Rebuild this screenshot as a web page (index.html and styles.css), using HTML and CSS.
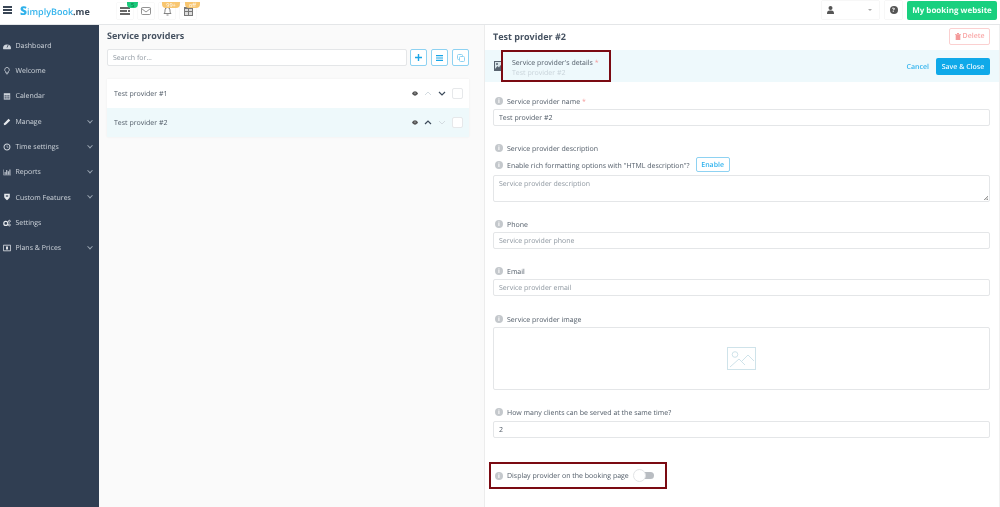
FILE: index.html
```html
<!DOCTYPE html>
<html lang="en">
<head>
<meta charset="utf-8">
<title>Service providers</title>
<link rel="stylesheet" href="styles.css">
</head>
<body>
<header class="topbar">
  <div class="burger"><i></i><i></i><i></i></div>
  <div class="logo"><span class="logo-s">S</span><span class="logo-blue">implyBook</span><span class="logo-dark">.me</span></div>
  <div class="top-icons">
    <div class="top-icon"><svg width="10" height="8" viewBox="0 0 10 8"><path d="M0 0h10v2H0zM0 3h7v2H0zM8 3h2v2H8zM0 6h10v2H0z" fill="#666"/></svg><span class="badge badge-green">5</span></div>
    <div class="top-icon"><svg width="10" height="8" viewBox="0 0 10 8" fill="none" stroke="#777" stroke-width=".8"><rect x=".5" y=".5" width="9" height="7" rx="1"/><path d="M.5 1.5 5 5l4.500-3.500"/></svg></div>
    <div class="top-icon"><svg width="9" height="10" viewBox="0 0 9 10" fill="none" stroke="#666" stroke-width=".8"><path d="M1 7.500c1-1 1-2 1-3.500a2.500 2.500 0 0 1 5 0c0 1.500 0 2.500 1 3.500zM3.500 9h2"/></svg><span class="badge badge-orange">99+</span></div>
    <div class="top-icon"><svg width="9" height="10" viewBox="0 0 9 10"><path d="M0 1h9v9H0z" fill="#777"/><path d="M1 3h3v2H1zM5 3h3v2H5zM1 6h3v3H1zM5 6h3v3H5z" fill="#ddd"/></svg><span class="badge badge-orange badge-off">off</span></div>
  </div>
  <div class="top-right">
    <div class="user-box"><svg width="7" height="8" viewBox="0 0 7 8"><circle cx="3.500" cy="2" r="2" fill="#555"/><path d="M0 8c0-3 1-3.500 3.500-3.500S7 5 7 8z" fill="#555"/></svg><span class="caret"></span></div>
    <div class="help-box"><span class="help">?</span></div>
    <a class="btn-site">My booking website</a>
  </div>
</header>
<div class="shell">
  <nav class="sidebar">
    <div class="nav-item"><svg class="nav-ico" viewBox="0 0 10 8"><path d="M0 7a5 5 0 1 1 10 0l-.5 1H.5z" fill="#ccd2da"/><path d="M5 6l1.500-3.500" stroke="#303e52"/></svg><span>Dashboard</span></div>
    <div class="nav-item"><svg class="nav-ico" viewBox="0 0 10 10"><path d="M5 .500a3 3 0 0 0-1.500 5.500V7.500h3V6A3 3 0 0 0 5 .500zM4 8.500h2" fill="none" stroke="#ccd2da" stroke-width="1"/></svg><span>Welcome</span></div>
    <div class="nav-item"><svg class="nav-ico" viewBox="0 0 10 10"><path d="M1 1.500h8v8H1z" fill="#ccd2da"/><path d="M2 4h1.500v1.500H2zM4.300 4h1.500v1.500H4.300zM6.500 4H8v1.500H6.500zM2 6.500h1.500V8H2zM4.300 6.500h1.500V8H4.300zM6.500 6.500H8V8H6.500z" fill="#303e52"/></svg><span>Calendar</span></div>
    <div class="nav-item"><svg class="nav-ico" viewBox="0 0 10 10"><path d="M1 9l.5-2.500L7 1l2 2-5.500 5.500z" fill="#e6e9ed"/></svg><span>Manage</span><i class="chev"></i></div>
    <div class="nav-item"><svg class="nav-ico" viewBox="0 0 10 10"><circle cx="5" cy="5" r="3.700" fill="none" stroke="#ccd2da" stroke-width="1.300"/><path d="M5 3v2.300h1.800" fill="none" stroke="#ccd2da" stroke-width=".8"/></svg><span>Time settings</span><i class="chev"></i></div>
    <div class="nav-item"><svg class="nav-ico" viewBox="0 0 10 10"><path d="M.5 9V2h.6v6.400H10V9zM2 8V5h1.300v3zM4 8V2.500h1.300V8zM6 8V4h1.300v4zM8 8V2h1.300v6z" fill="#ccd2da"/></svg><span>Reports</span><i class="chev"></i></div>
    <div class="nav-item"><svg class="nav-ico" viewBox="0 0 10 10"><path d="M1.500 1h7v3.500c0 2-2 3.500-3.500 4.500C3.500 8 1.500 6.500 1.500 4.500z" fill="#e6e9ed"/><path d="M3.500 3h3v1.500h-3z" fill="#303e52"/></svg><span>Custom Features</span><i class="chev"></i></div>
    <div class="nav-item"><svg class="nav-ico" viewBox="0 0 10 10"><circle cx="3.500" cy="5.500" r="2.500" fill="none" stroke="#e6e9ed" stroke-width="1.500"/><circle cx="8" cy="2.800" r="1.200" fill="none" stroke="#e6e9ed" stroke-width="1"/><circle cx="8" cy="7.500" r="1.200" fill="none" stroke="#e6e9ed" stroke-width="1"/></svg><span>Settings</span></div>
    <div class="nav-item"><svg class="nav-ico" viewBox="0 0 10 8"><path d="M.5.500h9v7h-9z" fill="none" stroke="#e6e9ed"/><path d="M3.800 2h2.400v4H3.800z" fill="#e6e9ed"/></svg><span>Plans &amp; Prices</span><i class="chev"></i></div>
  </nav>
  <main class="list-pane">
    <h1 class="pane-title">Service providers</h1>
    <div class="search-row">
      <div class="input search">Search for...</div>
      <span class="tool-btn"><svg width="7" height="7" viewBox="0 0 7 7"><path d="M2.800 0h1.400v2.800H7v1.400H4.200V7H2.800V4.200H0V2.800h2.800z" fill="#1aa5e6"/></svg></span>
      <span class="tool-btn"><svg width="7" height="6" viewBox="0 0 7 6"><path d="M0 0h7v1.200H0zM0 2.400h7v1.200H0zM0 4.800h7V6H0z" fill="#1aa5e6"/></svg></span>
      <span class="tool-btn"><svg width="8" height="8" viewBox="0 0 8 8" fill="none" stroke="#8ed2f2"><rect x=".5" y=".5" width="5" height="5" rx="1"/><rect x="2.500" y="2.500" width="5" height="5" rx="1" fill="#fff"/></svg></span>
    </div>
    <div class="provider-list">
      <div class="provider">
        <span class="provider-name">Test provider #1</span>
        <svg class="eye" width="6" height="5" viewBox="0 0 7 5"><path d="M0 2.500C1 1 2.200 0 3.500 0S6 1 7 2.500C6 4 4.800 5 3.500 5S1 4 0 2.500z" fill="#555"/><circle cx="3.500" cy="2" r=".7" fill="#ddd"/></svg>
        <svg class="arrow" width="8" height="5" viewBox="0 0 8 5" fill="none" stroke="#d3dbe0"><path d="M1 4l3-3 3 3"/></svg>
        <svg class="arrow" width="8" height="5" viewBox="0 0 8 5" fill="none" stroke="#3c4a5a" stroke-width="1.200"><path d="M1 1l3 3 3-3"/></svg>
        <span class="check"></span>
      </div>
      <div class="provider active">
        <span class="provider-name">Test provider #2</span>
        <svg class="eye" width="6" height="5" viewBox="0 0 7 5"><path d="M0 2.500C1 1 2.200 0 3.500 0S6 1 7 2.500C6 4 4.800 5 3.500 5S1 4 0 2.500z" fill="#555"/><circle cx="3.500" cy="2" r=".7" fill="#ddd"/></svg>
        <svg class="arrow" width="8" height="5" viewBox="0 0 8 5" fill="none" stroke="#3c4a5a" stroke-width="1.200"><path d="M1 4l3-3 3 3"/></svg>
        <svg class="arrow" width="8" height="5" viewBox="0 0 8 5" fill="none" stroke="#d3dbe0"><path d="M1 1l3 3 3-3"/></svg>
        <span class="check"></span>
      </div>
    </div>
  </main>
  <section class="detail-pane">
    <div class="detail-head">
      <h2 class="detail-title">Test provider #2</h2>
      <span class="btn-delete"><svg width="6" height="7" viewBox="0 0 6 7"><path d="M0 1h6v.8H0zM2 0h2v1H2zM.7 2h4.600v5H.7z" fill="#f49a9a"/></svg>Delete</span>
    </div>
    <div class="strip">
      <svg class="strip-ico" width="9" height="10" viewBox="0 0 9 10"><path d="M0 0h9v10H0z" fill="#58636f"/><path d="M1 1h7v8H1z" fill="#d9e6ea"/><circle cx="3" cy="3" r="1" fill="#58636f"/><path d="M1 8l2.500-3 1.500 1.500L6.500 4 8 6v3H1z" fill="#58636f"/></svg>
      <div class="mark strip-mark">
        <div class="strip-label">Service provider's details <b class="req">*</b></div>
        <div class="strip-sub">Test provider #2</div>
      </div>
      <a class="link-cancel">Cancel</a>
      <span class="btn-save">Save &amp; Close</span>
    </div>
    <div class="form">
      <div class="label f-name"><i class="info">i</i>Service provider name <b class="req">*</b></div>
      <div class="input value">Test provider #2</div>
      <div class="label f-desc"><i class="info">i</i>Service provider description</div>
      <div class="label f-rich"><i class="info">i</i>Enable rich formatting options with "HTML description"?<span class="btn-enable">Enable</span></div>
      <div class="input textarea">Service provider description<span class="grip"></span></div>
      <div class="label f-gap"><i class="info">i</i>Phone</div>
      <div class="input">Service provider phone</div>
      <div class="label f-gap"><i class="info">i</i>Email</div>
      <div class="input">Service provider email</div>
      <div class="label f-image"><i class="info">i</i>Service provider image</div>
      <div class="image-box">
        <svg width="29" height="23" viewBox="0 0 29 23" fill="none" stroke="#cfe3ea" stroke-width="1"><rect x=".5" y=".5" width="28" height="22"/><circle cx="8" cy="7.500" r="2.800"/><path d="M3 20l9-8 6 6M15 14l6-6 6 6"/></svg>
      </div>
      <div class="label f-clients"><i class="info">i</i>How many clients can be served at the same time?</div>
      <div class="input value">2</div>
      <div class="mark toggle-mark">
        <div class="label toggle-label"><i class="info">i</i>Display provider on the booking page</div>
        <span class="toggle"><span class="knob"></span></span>
      </div>
    </div>
  </section>
</div>
</body>
</html>
```
FILE: styles.css
```css
* { box-sizing: border-box; }
html { background: #fff; }
html, body { margin: 0; height: 507px; overflow: hidden; }
body { font-family: "Open Sans", "Liberation Sans", sans-serif; font-size: 7px; color: #505b67; background: #fff; text-rendering: geometricPrecision; filter: blur(.3px); }

.topbar { height: 25px; display: flex; align-items: center; background: #fff; border-bottom: 1px solid #e4e6e8; padding-bottom: 4px; }
.burger { width: 9px; margin-left: 3px; display: flex; flex-direction: column; gap: 1.500px; }
.burger i { display: block; height: 1.500px; background: #3a4656; }
.logo { margin-left: 8px; width: 97px; font-size: 9px; font-weight: 600; white-space: nowrap; }
.logo-s { color: #2fb1ea; font-weight: 800; font-size: 12px; }
.logo-blue { color: #35b4ec; }
.logo-dark { color: #3a4656; font-weight: 700; }
.top-icons { display: flex; gap: 5px; }
.top-icon { position: relative; width: 16px; height: 16px; display: flex; align-items: center; justify-content: center; background: #fff; box-shadow: 0 0 1px #ddd; margin-top: 2px; }
.badge { position: absolute; top: -1.500px; height: 6px; border-radius: 0 0 4px 4px; font-size: 5.500px; line-height: 6px; color: #fff; text-align: center; }
.badge-green { left: 10px; width: 11px; background: #19c97a; color: #0c6b40; }
.badge-orange { left: 3px; width: 18px; background: #f8c670; }
.badge-off { left: 5px; width: 15px; }
.top-right { margin-left: auto; display: flex; align-items: center; margin-right: 3px; }
.user-box { width: 57px; height: 18px; display: flex; align-items: center; justify-content: space-between; padding: 0 7px 0 5px; box-shadow: 0 0 1px #ccc; margin-right: 6px; }
.caret { border: 2px solid transparent; border-top-color: #aaa; margin-top: 2px; }
.help-box { width: 17px; height: 18px; display: flex; align-items: center; justify-content: center; box-shadow: 0 0 1px #ccc; margin-right: 5px; }
.help { width: 8px; height: 8px; border-radius: 50%; background: #555; color: #fff; font-size: 6px; line-height: 8px; text-align: center; font-weight: 700; }
.btn-site { width: 90px; height: 19px; background: #19d07f; color: #f2fff8; font-size: 8px; font-weight: 700; line-height: 20px; text-align: center; border-radius: 2px; white-space: nowrap; }

.shell { display: flex; height: 482px; }

.sidebar { width: 99px; flex: none; background: #303e52; padding-top: 8px; color: #d0d6dd; }
.nav-item { height: 25.300px; display: flex; align-items: center; padding: 0 7px 0 3px; white-space: nowrap; }
.nav-item span { padding-top: 1.500px; }
.nav-ico { width: 8px; height: 8px; margin-right: 4.500px; flex: none; }
.chev { margin-left: auto; width: 4px; height: 4px; border-right: 1px solid #9aa5b2; border-bottom: 1px solid #9aa5b2; transform: rotate(45deg) translate(-1px, -1px); }

.list-pane { width: 385px; flex: none; background: #fafafa; padding: 4px 15px 0 8px; }
.pane-title { margin: 0 0 -2px; font-size: 9px; line-height: 14px; font-weight: 700; color: #465261; }
.search-row { display: flex; gap: 4px; margin-top: 8px; }
.input { height: 17px; line-height: 17px; border: 1px solid #e4e6e8; border-radius: 2px; background: #fff; padding: 0 5px; color: #8e97a0; }
.input.value { color: #505b67; }
.search { width: 300px; margin-right: -1px; }
.tool-btn { width: 17px; height: 17px; border: 1px solid #8ed2f2; border-radius: 2px; background: #fff; display: flex; align-items: center; justify-content: center; }
.provider-list { margin-top: 13px; width: 362px; box-shadow: 0 0 2px #eee; }
.provider { height: 29px; display: flex; align-items: center; background: #fff; padding: 0 6px 0 7px; }
.provider.active { background: #eef9fb; }
.provider-name { flex: 1; color: #505b67; padding-top: 1.500px; }
.eye { margin-right: 6px; }
.arrow { margin-right: 6px; }
.check { width: 11px; height: 11px; border: 1px solid #e6e8ea; border-radius: 2px; background: #fff; }

.detail-pane { flex: 1; background: #fff; border-left: 1px solid #ececec; border-right: 1px solid #f0f0f0; }
.detail-head { height: 25px; display: flex; align-items: center; justify-content: space-between; padding: 0 9px 3px 8px; }
.detail-title { margin: 0; font-size: 9px; font-weight: 700; color: #465261; }
.btn-delete { width: 41px; height: 17px; padding-top: 1px; border: 1px solid #fbd0d0; border-radius: 2px; font-weight: 600; color: #f9a6a6; display: flex; align-items: center; justify-content: center; gap: 2px; }
.strip { height: 32px; background: #eef9fc; display: flex; align-items: center; padding: 0 9px; }
.mark { border: 2px solid #7b0a12; }
.strip-mark { width: 110px; height: 32px; margin-left: -2px; padding: 6px 0 0 9px; margin-right: auto; white-space: nowrap; }
.strip-label { line-height: 11px; color: #505b67; }
.strip-sub { line-height: 10px; color: #c9d4da; }
.req { color: #f49a9a; font-weight: 400; }
.link-cancel { color: #30b3ee; font-weight: 600; margin: 2px 7px 0 0; }
.btn-save { width: 54px; height: 17px; border-radius: 2px; background: #0fa9e9; color: #eef9ff; font-weight: 600; line-height: 19px; text-align: center; }

.form { padding: 0 9px 0 8px; }
.form > .input { width: 497px; }
.label { display: flex; align-items: flex-start; height: 10px; line-height: 14px; color: #505b67; white-space: nowrap; }
.label .req { margin-left: 2px; }
.info { width: 8px; height: 8px; margin: 1px 4px 0 2px; border-radius: 50%; background: #c4c8cc; color: #fff; font-size: 6px; line-height: 8px; text-align: center; font-style: normal; font-weight: 700; flex: none; }
.f-name { margin-top: 14px; margin-bottom: 3px; }
.f-desc { margin-top: 17px; }
.f-rich { margin-top: 4px; margin-bottom: 2px; height: 16px; padding-top: 3px; }
.f-gap { margin-top: 17px; margin-bottom: 3px; }
.f-image { margin-top: 18px; margin-bottom: 3px; }
.f-clients { margin-top: 17px; margin-bottom: 4px; }
.btn-enable { width: 34px; height: 15px; margin: -3px 0 0 6px; border: 1px solid #8ed2f2; border-radius: 2px; color: #30b3ee; font-weight: 600; line-height: 15px; text-align: center; }
.input.textarea { position: relative; height: 27px; line-height: 18px; }
.grip { position: absolute; right: 1px; bottom: 1px; width: 4px; height: 4px; background: linear-gradient(135deg, transparent 50%, #999 50%, #fff 70%, #999 80%); }
.image-box { width: 497px; height: 63px; border: 1px solid #e4e6e8; border-radius: 2px; display: flex; align-items: center; justify-content: center; }
.toggle-mark { display: flex; align-items: center; width: 178px; height: 27px; margin: 24px 0 0 -4px; padding-left: 2px; }
.toggle-label { margin: -2px 5px 0 0; }
.toggle-label .info { margin-top: 2px; }
.toggle { position: relative; display: block; width: 20px; height: 7px; border-radius: 4px; background: #b9bdc2; }
.knob { position: absolute; left: -1px; top: -3px; width: 13px; height: 13px; border-radius: 50%; background: #fff; border: 1px solid #e2e4e6; }
```
